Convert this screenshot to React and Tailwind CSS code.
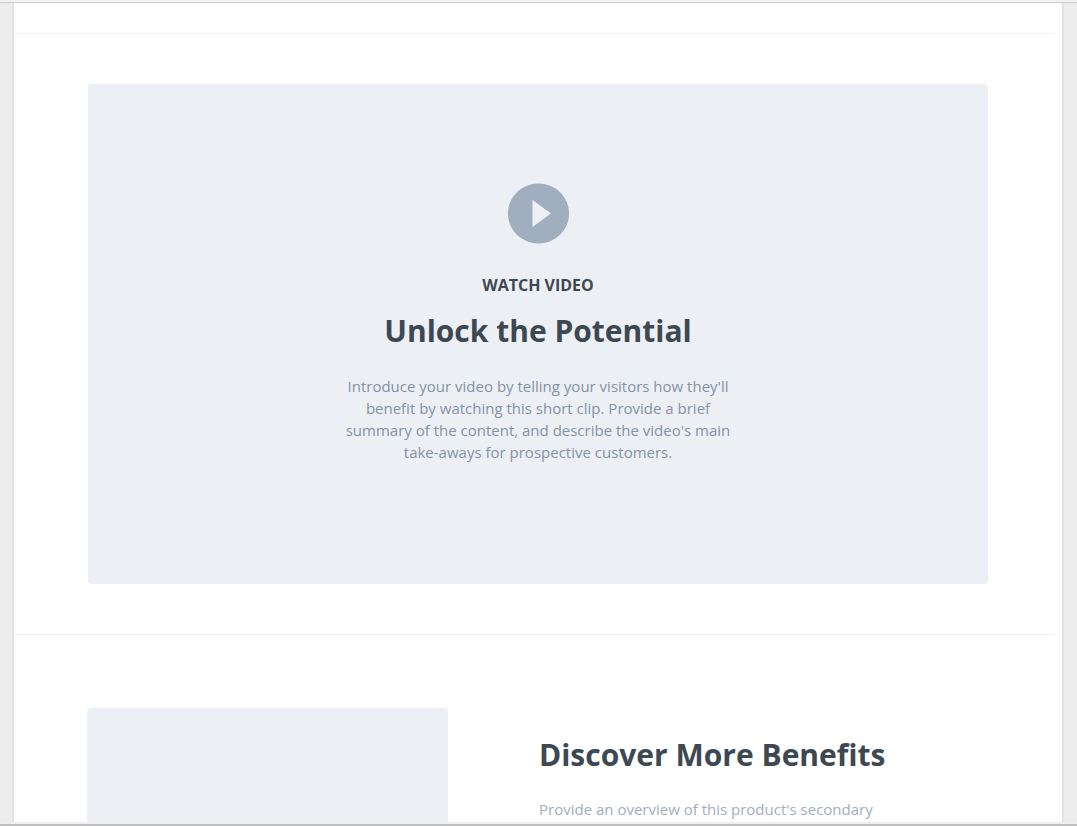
function Divider() {
  return <hr className="mr-2 border-t border-[#eff1f3]" />;
}

function PlayIcon() {
  return (
    <svg viewBox="0 0 62 62" className="size-[62px]" aria-hidden="true">
      <ellipse cx="31.5" cy="30.5" rx="30.6" ry="30.1" fill="#a0aec0" />
      <path d="M25.5 17 44 30.5 25.5 44Z" fill="#edf0f5" />
    </svg>
  );
}

function VideoSection() {
  return (
    <section className="px-6 py-[50px]">
      <div className="mx-auto flex min-h-[500px] max-w-[900px] flex-col items-center rounded bg-[#ecf0f5] px-6 pt-[99px] pb-20 text-center">
        <button type="button" aria-label="Play video" className="rounded-full">
          <PlayIcon />
        </button>
        <p className="mt-7 text-base leading-6 font-bold text-[#3d4852]">WATCH VIDEO</p>
        <h2 className="mt-[14px] text-[30px] leading-10 font-bold text-[#3d4852]">Unlock the Potential</h2>
        <p className="mt-6 max-w-[400px] text-[15px] leading-[22px] text-[#8492a6]">
          Introduce your video by telling your visitors how they'll benefit by watching this short
          clip. Provide a brief summary of the content, and describe the video's main take-aways
          for prospective customers.
        </p>
      </div>
    </section>
  );
}

function BenefitsSection() {
  return (
    <section className="px-6 pt-[73px]">
      <div className="mx-auto grid max-w-[902px] grid-cols-2">
        <div className="mr-[90px] h-[360px] rounded bg-[#ecf0f5]" />
        <div className="pt-[27px] pl-px">
          <h2 className="text-[30px] leading-10 font-bold text-[#3d4852]">Discover More Benefits</h2>
          <p className="mt-[23px] max-w-[360px] text-[15px] leading-[22px] text-[#a0aec0]">
            Provide an overview of this product's secondary
          </p>
        </div>
      </div>
    </section>
  );
}

export default function App() {
  return (
    <div className="flex h-screen flex-col overflow-hidden border-t-2 border-b-2 border-t-[#f2f2f2] border-b-[#c0c0c0] bg-[#ededed] font-['Open_Sans',sans-serif]">
      <div className="flex min-h-0 flex-1 flex-col border-t border-b-2 border-t-[#cccccc] border-b-[#efefef] pr-[13px] pl-3">
        <main className="min-h-0 flex-1 overflow-hidden border-x-2 border-[#e4e4e4] bg-white pt-[30px]">
          <Divider />
          <VideoSection />
          <Divider />
          <BenefitsSection />
        </main>
      </div>
    </div>
  );
}
